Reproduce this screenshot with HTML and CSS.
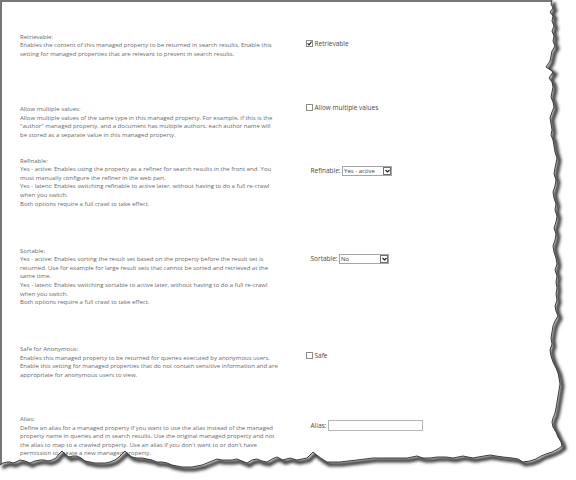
FILE: index.html
```html
<!DOCTYPE html>
<html lang="en">
<head>
    <meta charset="UTF-8">
    <meta name="viewport" content="width=device-width, initial-scale=1.0">
    <title>Managed property settings</title>
    <link rel="stylesheet" href="styles.css">
</head>
<body>
    <div class="sheet">
        <div class="row row-retrievable">
            <div class="desc">
                <div>Retrievable:</div>
                <div>Enables the content of this managed property to be returned in search results. Enable this setting for managed properties that are relevant to present in search results.</div>
            </div>
            <div class="ctrl">
                <label class="check">
                    <span class="box"><svg width="5" height="5" viewBox="0 0 5 5"><path d="M0.6 2.4 L2 3.9 L4.5 0.7" fill="none" stroke="#222" stroke-width="1.1"/></svg></span>
                    Retrievable
                </label>
            </div>
        </div>

        <div class="row row-multi">
            <div class="desc">
                <div>Allow multiple values:</div>
                <div>Allow multiple values of the same type in this managed property. For example, if this is the "author" managed property, and a document has multiple authors, each author name will be stored as a separate value in this managed property.</div>
            </div>
            <div class="ctrl">
                <label class="check"><span class="box"></span>Allow multiple values</label>
            </div>
        </div>

        <div class="row row-refinable">
            <div class="desc">
                <div>Refinable:</div>
                <div>Yes - active: Enables using the property as a refiner for search results in the front end. You must manually configure the refiner in the web part.</div>
                <div>Yes - latent: Enables switching refinable to active later, without having to do a full re-crawl when you switch.</div>
                <div>Both options require a full crawl to take effect.</div>
            </div>
            <div class="ctrl">
                <div class="field">
                    <span>Refinable:</span>
                    <span class="select">
                        <span class="select-value">Yes - active</span>
                        <span class="select-arrow"><svg width="5" height="4" viewBox="0 0 5 4"><path d="M0.5 1 L2.5 3 L4.5 1" fill="none" stroke="#1a1a1a" stroke-width="1.1"/></svg></span>
                    </span>
                </div>
            </div>
        </div>

        <div class="row row-sortable">
            <div class="desc">
                <div>Sortable:</div>
                <div>Yes - active: Enables sorting the result set based on the property before the result set is returned. Use for example for large result sets that cannot be sorted and retrieved at the same time.</div>
                <div>Yes - latent: Enables switching sortable to active later, without having to do a full re-crawl when you switch.</div>
                <div>Both options require a full crawl to take effect.</div>
            </div>
            <div class="ctrl">
                <div class="field">
                    <span>Sortable:</span>
                    <span class="select">
                        <span class="select-value">No</span>
                        <span class="select-arrow"><svg width="5" height="4" viewBox="0 0 5 4"><path d="M0.5 1 L2.5 3 L4.5 1" fill="none" stroke="#1a1a1a" stroke-width="1.1"/></svg></span>
                    </span>
                </div>
            </div>
        </div>

        <div class="row row-safe">
            <div class="desc">
                <div>Safe for Anonymous:</div>
                <div>Enables this managed property to be returned for queries executed by anonymous users. Enable this setting for managed properties that do not contain sensitive information and are appropriate for anonymous users to view.</div>
            </div>
            <div class="ctrl">
                <label class="check"><span class="box"></span>Safe</label>
            </div>
        </div>

        <div class="row row-alias">
            <div class="desc">
                <div>Alias:</div>
                <div>Define an alias for a managed property if you want to use the alias instead of the managed property name in queries and in search results. Use the original managed property and not the alias to map to a crawled property. Use an alias if you don't want to or don't have permission to create a new managed property.</div>
            </div>
            <div class="ctrl">
                <div class="field">
                    <span>Alias:</span>
                    <span class="textbox"></span>
                </div>
            </div>
        </div>
    </div>

    <!-- torn paper edge on the right and bottom -->
    <svg class="torn" width="576" height="480" viewBox="0 0 576 480">
        <defs>
            <filter id="blur" x="-5%" y="-5%" width="110%" height="110%">
                <feGaussianBlur stdDeviation="1.4"/>
            </filter>
            <path id="edge" d="M552,0 L551,4 553,8 550,12 553,16 552,21 554,26 552,31 554,36 553,41 555,46 552,51 551,56 550,61 548,64 546,67 549,69 553,72 551,75 549,78 552,82 553,87 552,92 551,97 553,102 554,107 552,112 550,118 551,124 552,130 551,135 553,140 554,146 555,152 557,158 556,163 555,168 554,174 556,180 555,186 553,192 554,198 556,204 555,210 557,216 556,222 554,228 556,234 555,240 553,246 554,252 556,258 557,264 555,270 557,276 556,282 557,288 556,294 557,300 555,306 556,311 558,316 555,321 553,326 552,332 551,338 552,344 550,350 551,356 553,362 556,368 558,373 559,378 560,384 559,390 558,396 557,402 556,408 555,413 553,418 552,422 553,427 556,432 558,437 561,442 562,446 558,449 552,452 546,454 541,456 536,459 530,461 523,462 518,459 512,458 503,457 496,456 490,455 484,456 478,457 473,458 468,457 463,456 458,457 453,458 446,457 437,457 430,458 423,458 417,456 412,457 407,458 398,458 390,458 381,458 373,458 365,459 357,460 348,461 340,462 333,462 327,462 322,459 318,456 313,452 310,455 307,458 302,459 297,460 290,458 283,460 277,457 272,459 267,462 262,461 257,459 252,460 247,463 242,461 237,459 232,460 227,460 222,460 217,459 212,461 207,463 202,465 197,466 192,467 187,467 182,467 177,466 172,465 167,463 162,462 157,462 152,460 147,459 142,458 137,458 132,457 128,454 125,451 122,454 119,457 115,460 110,462 105,463 100,463 95,463 90,462 85,461 81,458 77,456 73,456 69,457 65,454 62,451 59,454 56,458 52,460 48,461 44,460 40,460 35,461 30,463 25,461 20,460 16,462 13,463 10,462 7,462 3,463 0,465"/>
            <path id="outsideShape" d="M552,0 L551,4 553,8 550,12 553,16 552,21 554,26 552,31 554,36 553,41 555,46 552,51 551,56 550,61 548,64 546,67 549,69 553,72 551,75 549,78 552,82 553,87 552,92 551,97 553,102 554,107 552,112 550,118 551,124 552,130 551,135 553,140 554,146 555,152 557,158 556,163 555,168 554,174 556,180 555,186 553,192 554,198 556,204 555,210 557,216 556,222 554,228 556,234 555,240 553,246 554,252 556,258 557,264 555,270 557,276 556,282 557,288 556,294 557,300 555,306 556,311 558,316 555,321 553,326 552,332 551,338 552,344 550,350 551,356 553,362 556,368 558,373 559,378 560,384 559,390 558,396 557,402 556,408 555,413 553,418 552,422 553,427 556,432 558,437 561,442 562,446 558,449 552,452 546,454 541,456 536,459 530,461 523,462 518,459 512,458 503,457 496,456 490,455 484,456 478,457 473,458 468,457 463,456 458,457 453,458 446,457 437,457 430,458 423,458 417,456 412,457 407,458 398,458 390,458 381,458 373,458 365,459 357,460 348,461 340,462 333,462 327,462 322,459 318,456 313,452 310,455 307,458 302,459 297,460 290,458 283,460 277,457 272,459 267,462 262,461 257,459 252,460 247,463 242,461 237,459 232,460 227,460 222,460 217,459 212,461 207,463 202,465 197,466 192,467 187,467 182,467 177,466 172,465 167,463 162,462 157,462 152,460 147,459 142,458 137,458 132,457 128,454 125,451 122,454 119,457 115,460 110,462 105,463 100,463 95,463 90,462 85,461 81,458 77,456 73,456 69,457 65,454 62,451 59,454 56,458 52,460 48,461 44,460 40,460 35,461 30,463 25,461 20,460 16,462 13,463 10,462 7,462 3,463 0,465 L-2,465 -2,482 578,482 578,-2 552,-2 Z"/>
            <clipPath id="outside">
                <use href="#outsideShape"/>
            </clipPath>
        </defs>
        <use href="#outsideShape" fill="#fff"/>
        <g clip-path="url(#outside)">
            <use href="#edge" class="edge-shadow" transform="translate(2.5 2.5)" filter="url(#blur)"/>
        </g>
        <use href="#edge" class="edge-line"/>
    </svg>
</body>
</html>
```

FILE: styles.css
```css
* {
    margin: 0;
    padding: 0;
    box-sizing: border-box;
}
body {
    position: relative;
    width: 576px;
    height: 480px;
    overflow: hidden;
    background: #fff;
    font-family: "Open Sans", "Noto Sans", sans-serif;
}
.sheet {
    height: 480px;
    border-top: 2px solid #777;
    border-left: 2px solid #777;
    padding: 30.7px 0 0 18px;
}
.row {
    display: grid;
    grid-template-columns: 258px 1fr;
    column-gap: 28px;
    align-items: start;
}
.desc {
    font-size: 6px;
    line-height: 8.6px;
    color: #6a6a6a;
}
.ctrl {
    font-size: 6.5px;
    line-height: 9px;
    color: #4a4a4a;
}

/* row heights and control offsets */
.row-retrievable { height: 72.3px; }
.row-retrievable .ctrl { margin-top: 6px; }
.row-multi { height: 51.7px; }
.row-multi .ctrl { margin-top: -2px; }
.row-refinable { height: 90px; }
.row-refinable .ctrl { margin-top: 9px; }
.row-sortable { height: 98.3px; }
.row-sortable .ctrl { margin-top: 7px; }
.row-safe { height: 70px; }
.row-safe .ctrl { margin-top: 6px; }
.row-alias .ctrl { margin-top: 5.5px; }

.check {
    display: flex;
    align-items: center;
    gap: 1.5px;
}
.box {
    width: 7px;
    height: 7px;
    border: 1px solid #8c8c8c;
    background: #fff;
    display: inline-flex;
    align-items: center;
    justify-content: center;
}
.field {
    display: flex;
    align-items: center;
    gap: 1.5px;
    padding-left: 4.5px;
}
.select {
    width: 50px;
    height: 10px;
    border: 1px solid #a5a5a5;
    display: flex;
    align-items: stretch;
    background: #fff;
}
.select-value {
    flex: 1;
    padding-left: 1px;
    line-height: 8px;
    font-size: 6px;
    color: #444;
}
.select-arrow {
    width: 8px;
    border: 1px solid #707070;
    display: flex;
    align-items: center;
    justify-content: center;
}
.textbox {
    width: 95px;
    height: 11px;
    border: 1px solid #b5b5b5;
    background: #fff;
}

.torn {
    position: absolute;
    top: 0;
    left: 0;
    pointer-events: none;
}
.edge-shadow {
    fill: none;
    stroke: #3a3a3a;
    stroke-width: 4;
}
.edge-line {
    fill: none;
    stroke: #2a2a2a;
    stroke-width: 0.9;
}
```
